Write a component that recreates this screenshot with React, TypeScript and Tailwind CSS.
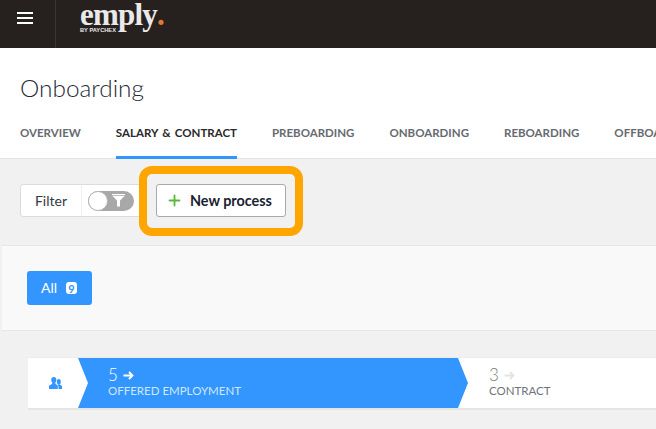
import React from 'react';
import { Plus } from 'lucide-react';

const tabs = ['OVERVIEW', 'SALARY & CONTRACT', 'PREBOARDING', 'ONBOARDING', 'REBOARDING', 'OFFBOARDING'];

const FunnelIcon = () => (
  <svg width="13" height="13" viewBox="0 0 13 13" fill="#fff">
    <path d="M0 0h13v1.200H0zM0.500 2h12L8 6.500V12.500H5V6.500z" />
  </svg>
);

const PeopleIcon = () => (
  <svg width="13" height="12" viewBox="0 0 13 12" fill="#3396ff">
    <ellipse cx="9.800" cy="4.800" rx="2" ry="2.800" />
    <path d="M8.500 7.500h2.600l1.900 1.400V12H9.500V9.500z" />
    <ellipse cx="4.800" cy="3" rx="2.600" ry="3" />
    <path d="M3.300 5.500h3l.3 1.600L8.800 8.400V12H0V8.800l3-1.700z" />
  </svg>
);

const ArrowIcon = ({ color }: { color: string }) => (
  <svg width="11" height="9" viewBox="0 0 11 9" fill="none" stroke={color} strokeWidth="1.800">
    <path d="M0.500 4.500h8.500M6 1l3.500 3.500L6 8" />
  </svg>
);

export default function App() {
  return (
    <div className="relative h-[429px] w-[656px] overflow-hidden bg-[#f1f1f1] font-['Lato','Liberation_Sans',sans-serif]">
      {/* top bar */}
      <header className="flex h-12 items-stretch bg-[#26211f]">
        <div className="flex w-[56px] items-start justify-center border-r border-[#3a3533] pr-[5px] pt-[12px]">
          <div className="flex w-4 flex-col gap-[3px]">
            <span className="h-[2px] bg-white" />
            <span className="h-[2px] bg-white" />
            <span className="h-[2px] bg-white" />
          </div>
        </div>
        <div className="ml-6 flex flex-col pt-[3px] text-[#e9e9e9]">
          <div className="flex items-baseline whitespace-nowrap font-['Liberation_Serif',serif] text-[31px] font-bold leading-[24px] tracking-[-0.8px]">
            emply<span className="text-[#e07a32]">.</span>
          </div>
          <span className="whitespace-nowrap font-['Liberation_Sans',sans-serif] text-[5.700px] font-bold leading-[6px]">BY PAYCHEX</span>
        </div>
      </header>

      {/* title and tabs */}
      <section className="h-[111px] border-b border-[#e3e3e3] bg-white">
        <h1 className="pl-5 pt-[25px] text-[24.400px] font-light leading-[30px] text-[#1f2a36]">Onboarding</h1>
        <nav className="mt-[10px] flex gap-[35px] whitespace-nowrap pl-5 [word-spacing:1.500px]">
          {tabs.map((tab, i) => (
            <div
              key={tab}
              className={`h-[46px] border-b-[3px] pt-[12px] text-[11.500px] font-bold leading-[16px] ${
                i === 1 ? 'border-[#3396ff] text-[#2a2a2a]' : 'border-transparent text-[#666a70]'
              }`}
            >
              {tab}
            </div>
          ))}
        </nav>
      </section>

      {/* filter row */}
      <div className="flex h-[86px] items-start gap-[14px] pl-5 pt-[25px]">
        <div className="flex h-[33px] w-[122px] items-center rounded-[3px] border border-[#dcdcdc] bg-white">
          <span className="w-[61px] border-r border-[#eeeeee] text-center text-[14px] leading-[31px] text-[#333a44]">Filter</span>
          <span className="ml-[6px] flex h-[20px] w-[46px] items-center justify-between rounded-full bg-[#a8a8a8] pr-[9px]">
            <span className="h-[20px] w-[20px] rounded-full border border-[#b5b5b5] bg-white" />
            <FunnelIcon />
          </span>
        </div>
        <button className="flex h-[33px] w-[130px] items-center rounded-[3px] border border-[#a9a9a9] bg-white pl-[8.500px]">
          <Plus size={17} strokeWidth={2.600} className="text-[#5cb83c]" />
          <span className="ml-[7.500px] whitespace-nowrap text-[14.400px] font-bold leading-5 text-[#1a2230]">New process</span>
        </button>
      </div>

      {/* tag band */}
      <section className="ml-[2px] flex h-[86px] items-start border-y border-[#e6e6e6] bg-[#f9f9f9] pl-[25px] pt-[25px]">
        <div className="flex h-[34px] w-[65px] items-center rounded-[3px] bg-[#3396ff] pl-[14px] text-white">
          <span className="text-[14px] leading-5">All</span>
          <span className="ml-[9px] flex h-[12px] w-[11px] items-center justify-center rounded-[3px] bg-white text-[11px] font-bold leading-none text-[#3396ff]">9</span>
        </div>
      </section>

      {/* process steps */}
      <div className="ml-[28px] mt-[27px] flex h-[50px] bg-white shadow-[0_2px_0_#e5e5e5,0_-1px_0_#ebebeb]">
        <div className="flex w-[50px] items-center justify-center pl-[4px]">
          <PeopleIcon />
        </div>
        <div className="w-[390px] bg-[#3396ff] pl-[30px] [clip-path:polygon(0_0,calc(100%-10px)_0,100%_50%,calc(100%-10px)_100%,0_100%,10px_50%)]">
          <div className="flex items-center gap-[5px] pt-[8px] text-white">
            <span className="text-[17px] font-light leading-[18px]">5</span>
            <ArrowIcon color="#ffffff" />
          </div>
          <div className="text-[11.500px] leading-[14px] text-[#d0e6ff]">OFFERED EMPLOYMENT</div>
        </div>
        <div className="pl-[21px]">
          <div className="flex items-center gap-[5px] pt-[8px]">
            <span className="text-[17px] font-light leading-[18px] text-[#7a7a7a]">3</span>
            <ArrowIcon color="#e4e4e4" />
          </div>
          <div className="text-[11.500px] leading-[14px] text-[#6d747c]">CONTRACT</div>
        </div>
      </div>

      {/* callout around the button */}
      <div className="absolute left-[139px] top-[166px] h-[70px] w-[164px] rounded-[13px] border-[8px] border-[#ffa500]" />
    </div>
  );
}
